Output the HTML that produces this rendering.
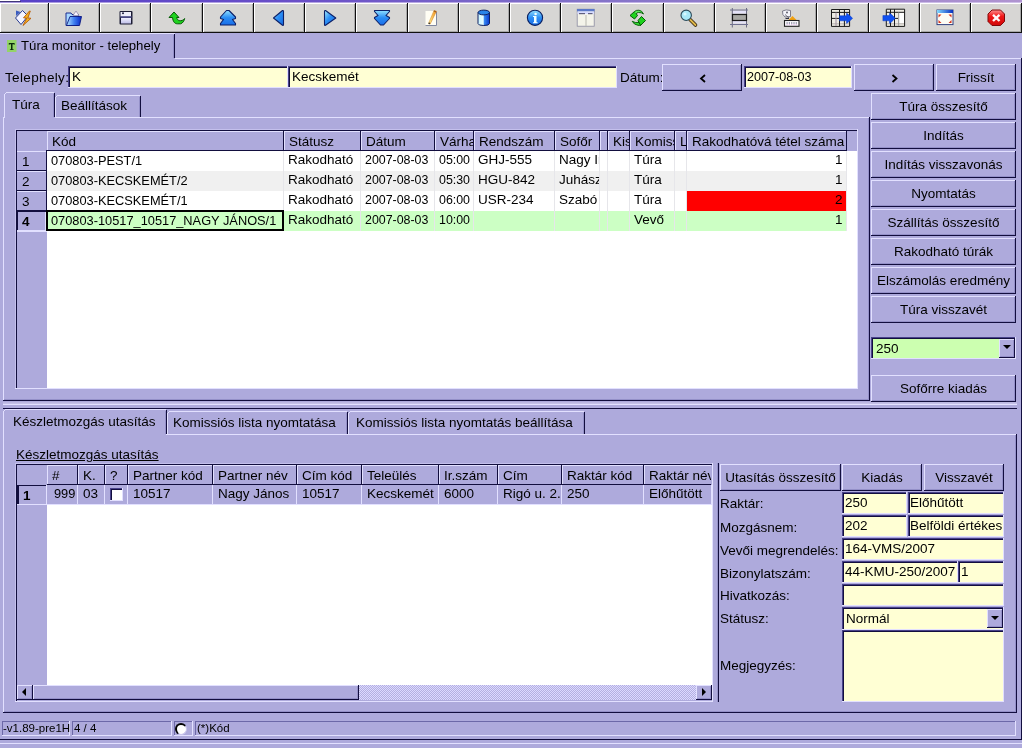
<!DOCTYPE html>
<html><head><meta charset="utf-8"><style>
html,body{margin:0;padding:0;}
body{width:1022px;height:748px;overflow:hidden;position:relative;background:#aeaadc;font-family:"Liberation Sans",sans-serif;font-size:13.5px;color:#000;}
body>div{position:absolute;}
.t{white-space:nowrap;line-height:15px;height:15px;will-change:transform;}
</style></head><body>
<div style="left:0px;top:0px;width:1022px;height:2px;background:linear-gradient(to right,#5640c8 0%,#6a50c8 30%,#8070c8 55%,#b094d0 100%)"></div>
<div style="left:0px;top:0px;width:20px;height:1px;background:#ffffff"></div>
<div style="left:0px;top:1px;width:21px;height:1px;background:#403678"></div>
<div style="left:0px;top:2px;width:1022px;height:1px;background:linear-gradient(to right,#a898e0,#d0c0e8)"></div>
<div style="left:0px;top:3px;width:49px;height:30px;background:#d7d6d4"></div>
<div style="left:0px;top:3px;width:49px;height:1px;background:#ffffff"></div>
<div style="left:0px;top:3px;width:1px;height:29px;background:#ffffff"></div>
<div style="left:47px;top:4px;width:1px;height:28px;background:#a8a8a8"></div>
<div style="left:1px;top:31px;width:47px;height:1px;background:#a8a8a8"></div>
<div style="left:48px;top:3px;width:1px;height:30px;background:#101010"></div>
<div style="left:0px;top:32px;width:49px;height:1px;background:#101010"></div>
<div style="left:49px;top:3px;width:51px;height:30px;background:#d7d6d4"></div>
<div style="left:49px;top:3px;width:51px;height:1px;background:#ffffff"></div>
<div style="left:49px;top:3px;width:1px;height:29px;background:#ffffff"></div>
<div style="left:98px;top:4px;width:1px;height:28px;background:#a8a8a8"></div>
<div style="left:50px;top:31px;width:49px;height:1px;background:#a8a8a8"></div>
<div style="left:99px;top:3px;width:1px;height:30px;background:#101010"></div>
<div style="left:49px;top:32px;width:51px;height:1px;background:#101010"></div>
<div style="left:100px;top:3px;width:51px;height:30px;background:#d7d6d4"></div>
<div style="left:100px;top:3px;width:51px;height:1px;background:#ffffff"></div>
<div style="left:100px;top:3px;width:1px;height:29px;background:#ffffff"></div>
<div style="left:149px;top:4px;width:1px;height:28px;background:#a8a8a8"></div>
<div style="left:101px;top:31px;width:49px;height:1px;background:#a8a8a8"></div>
<div style="left:150px;top:3px;width:1px;height:30px;background:#101010"></div>
<div style="left:100px;top:32px;width:51px;height:1px;background:#101010"></div>
<div style="left:151px;top:3px;width:52px;height:30px;background:#d7d6d4"></div>
<div style="left:151px;top:3px;width:52px;height:1px;background:#ffffff"></div>
<div style="left:151px;top:3px;width:1px;height:29px;background:#ffffff"></div>
<div style="left:201px;top:4px;width:1px;height:28px;background:#a8a8a8"></div>
<div style="left:152px;top:31px;width:50px;height:1px;background:#a8a8a8"></div>
<div style="left:202px;top:3px;width:1px;height:30px;background:#101010"></div>
<div style="left:151px;top:32px;width:52px;height:1px;background:#101010"></div>
<div style="left:203px;top:3px;width:51px;height:30px;background:#d7d6d4"></div>
<div style="left:203px;top:3px;width:51px;height:1px;background:#ffffff"></div>
<div style="left:203px;top:3px;width:1px;height:29px;background:#ffffff"></div>
<div style="left:252px;top:4px;width:1px;height:28px;background:#a8a8a8"></div>
<div style="left:204px;top:31px;width:49px;height:1px;background:#a8a8a8"></div>
<div style="left:253px;top:3px;width:1px;height:30px;background:#101010"></div>
<div style="left:203px;top:32px;width:51px;height:1px;background:#101010"></div>
<div style="left:254px;top:3px;width:51px;height:30px;background:#d7d6d4"></div>
<div style="left:254px;top:3px;width:51px;height:1px;background:#ffffff"></div>
<div style="left:254px;top:3px;width:1px;height:29px;background:#ffffff"></div>
<div style="left:303px;top:4px;width:1px;height:28px;background:#a8a8a8"></div>
<div style="left:255px;top:31px;width:49px;height:1px;background:#a8a8a8"></div>
<div style="left:304px;top:3px;width:1px;height:30px;background:#101010"></div>
<div style="left:254px;top:32px;width:51px;height:1px;background:#101010"></div>
<div style="left:305px;top:3px;width:51px;height:30px;background:#d7d6d4"></div>
<div style="left:305px;top:3px;width:51px;height:1px;background:#ffffff"></div>
<div style="left:305px;top:3px;width:1px;height:29px;background:#ffffff"></div>
<div style="left:354px;top:4px;width:1px;height:28px;background:#a8a8a8"></div>
<div style="left:306px;top:31px;width:49px;height:1px;background:#a8a8a8"></div>
<div style="left:355px;top:3px;width:1px;height:30px;background:#101010"></div>
<div style="left:305px;top:32px;width:51px;height:1px;background:#101010"></div>
<div style="left:356px;top:3px;width:52px;height:30px;background:#d7d6d4"></div>
<div style="left:356px;top:3px;width:52px;height:1px;background:#ffffff"></div>
<div style="left:356px;top:3px;width:1px;height:29px;background:#ffffff"></div>
<div style="left:406px;top:4px;width:1px;height:28px;background:#a8a8a8"></div>
<div style="left:357px;top:31px;width:50px;height:1px;background:#a8a8a8"></div>
<div style="left:407px;top:3px;width:1px;height:30px;background:#101010"></div>
<div style="left:356px;top:32px;width:52px;height:1px;background:#101010"></div>
<div style="left:408px;top:3px;width:51px;height:30px;background:#d7d6d4"></div>
<div style="left:408px;top:3px;width:51px;height:1px;background:#ffffff"></div>
<div style="left:408px;top:3px;width:1px;height:29px;background:#ffffff"></div>
<div style="left:457px;top:4px;width:1px;height:28px;background:#a8a8a8"></div>
<div style="left:409px;top:31px;width:49px;height:1px;background:#a8a8a8"></div>
<div style="left:458px;top:3px;width:1px;height:30px;background:#101010"></div>
<div style="left:408px;top:32px;width:51px;height:1px;background:#101010"></div>
<div style="left:459px;top:3px;width:51px;height:30px;background:#d7d6d4"></div>
<div style="left:459px;top:3px;width:51px;height:1px;background:#ffffff"></div>
<div style="left:459px;top:3px;width:1px;height:29px;background:#ffffff"></div>
<div style="left:508px;top:4px;width:1px;height:28px;background:#a8a8a8"></div>
<div style="left:460px;top:31px;width:49px;height:1px;background:#a8a8a8"></div>
<div style="left:509px;top:3px;width:1px;height:30px;background:#101010"></div>
<div style="left:459px;top:32px;width:51px;height:1px;background:#101010"></div>
<div style="left:510px;top:3px;width:51px;height:30px;background:#d7d6d4"></div>
<div style="left:510px;top:3px;width:51px;height:1px;background:#ffffff"></div>
<div style="left:510px;top:3px;width:1px;height:29px;background:#ffffff"></div>
<div style="left:559px;top:4px;width:1px;height:28px;background:#a8a8a8"></div>
<div style="left:511px;top:31px;width:49px;height:1px;background:#a8a8a8"></div>
<div style="left:560px;top:3px;width:1px;height:30px;background:#101010"></div>
<div style="left:510px;top:32px;width:51px;height:1px;background:#101010"></div>
<div style="left:561px;top:3px;width:51px;height:30px;background:#d7d6d4"></div>
<div style="left:561px;top:3px;width:51px;height:1px;background:#ffffff"></div>
<div style="left:561px;top:3px;width:1px;height:29px;background:#ffffff"></div>
<div style="left:610px;top:4px;width:1px;height:28px;background:#a8a8a8"></div>
<div style="left:562px;top:31px;width:49px;height:1px;background:#a8a8a8"></div>
<div style="left:611px;top:3px;width:1px;height:30px;background:#101010"></div>
<div style="left:561px;top:32px;width:51px;height:1px;background:#101010"></div>
<div style="left:612px;top:3px;width:52px;height:30px;background:#d7d6d4"></div>
<div style="left:612px;top:3px;width:52px;height:1px;background:#ffffff"></div>
<div style="left:612px;top:3px;width:1px;height:29px;background:#ffffff"></div>
<div style="left:662px;top:4px;width:1px;height:28px;background:#a8a8a8"></div>
<div style="left:613px;top:31px;width:50px;height:1px;background:#a8a8a8"></div>
<div style="left:663px;top:3px;width:1px;height:30px;background:#101010"></div>
<div style="left:612px;top:32px;width:52px;height:1px;background:#101010"></div>
<div style="left:664px;top:3px;width:51px;height:30px;background:#d7d6d4"></div>
<div style="left:664px;top:3px;width:51px;height:1px;background:#ffffff"></div>
<div style="left:664px;top:3px;width:1px;height:29px;background:#ffffff"></div>
<div style="left:713px;top:4px;width:1px;height:28px;background:#a8a8a8"></div>
<div style="left:665px;top:31px;width:49px;height:1px;background:#a8a8a8"></div>
<div style="left:714px;top:3px;width:1px;height:30px;background:#101010"></div>
<div style="left:664px;top:32px;width:51px;height:1px;background:#101010"></div>
<div style="left:715px;top:3px;width:51px;height:30px;background:#d7d6d4"></div>
<div style="left:715px;top:3px;width:51px;height:1px;background:#ffffff"></div>
<div style="left:715px;top:3px;width:1px;height:29px;background:#ffffff"></div>
<div style="left:764px;top:4px;width:1px;height:28px;background:#a8a8a8"></div>
<div style="left:716px;top:31px;width:49px;height:1px;background:#a8a8a8"></div>
<div style="left:765px;top:3px;width:1px;height:30px;background:#101010"></div>
<div style="left:715px;top:32px;width:51px;height:1px;background:#101010"></div>
<div style="left:766px;top:3px;width:51px;height:30px;background:#d7d6d4"></div>
<div style="left:766px;top:3px;width:51px;height:1px;background:#ffffff"></div>
<div style="left:766px;top:3px;width:1px;height:29px;background:#ffffff"></div>
<div style="left:815px;top:4px;width:1px;height:28px;background:#a8a8a8"></div>
<div style="left:767px;top:31px;width:49px;height:1px;background:#a8a8a8"></div>
<div style="left:816px;top:3px;width:1px;height:30px;background:#101010"></div>
<div style="left:766px;top:32px;width:51px;height:1px;background:#101010"></div>
<div style="left:817px;top:3px;width:52px;height:30px;background:#d7d6d4"></div>
<div style="left:817px;top:3px;width:52px;height:1px;background:#ffffff"></div>
<div style="left:817px;top:3px;width:1px;height:29px;background:#ffffff"></div>
<div style="left:867px;top:4px;width:1px;height:28px;background:#a8a8a8"></div>
<div style="left:818px;top:31px;width:50px;height:1px;background:#a8a8a8"></div>
<div style="left:868px;top:3px;width:1px;height:30px;background:#101010"></div>
<div style="left:817px;top:32px;width:52px;height:1px;background:#101010"></div>
<div style="left:869px;top:3px;width:51px;height:30px;background:#d7d6d4"></div>
<div style="left:869px;top:3px;width:51px;height:1px;background:#ffffff"></div>
<div style="left:869px;top:3px;width:1px;height:29px;background:#ffffff"></div>
<div style="left:918px;top:4px;width:1px;height:28px;background:#a8a8a8"></div>
<div style="left:870px;top:31px;width:49px;height:1px;background:#a8a8a8"></div>
<div style="left:919px;top:3px;width:1px;height:30px;background:#101010"></div>
<div style="left:869px;top:32px;width:51px;height:1px;background:#101010"></div>
<div style="left:920px;top:3px;width:51px;height:30px;background:#d7d6d4"></div>
<div style="left:920px;top:3px;width:51px;height:1px;background:#ffffff"></div>
<div style="left:920px;top:3px;width:1px;height:29px;background:#ffffff"></div>
<div style="left:969px;top:4px;width:1px;height:28px;background:#a8a8a8"></div>
<div style="left:921px;top:31px;width:49px;height:1px;background:#a8a8a8"></div>
<div style="left:970px;top:3px;width:1px;height:30px;background:#101010"></div>
<div style="left:920px;top:32px;width:51px;height:1px;background:#101010"></div>
<div style="left:971px;top:3px;width:51px;height:30px;background:#d7d6d4"></div>
<div style="left:971px;top:3px;width:51px;height:1px;background:#ffffff"></div>
<div style="left:971px;top:3px;width:1px;height:29px;background:#ffffff"></div>
<div style="left:1020px;top:4px;width:1px;height:28px;background:#a8a8a8"></div>
<div style="left:972px;top:31px;width:49px;height:1px;background:#a8a8a8"></div>
<div style="left:1021px;top:3px;width:1px;height:30px;background:#101010"></div>
<div style="left:971px;top:32px;width:51px;height:1px;background:#101010"></div>
<svg style="position:absolute;left:12px;top:6px;overflow:visible" width="24" height="24" viewBox="0 0 24 24"><defs>
<linearGradient id="gb" x1="0" y1="0" x2="0" y2="1"><stop offset="0" stop-color="#90e0ff"/><stop offset="0.5" stop-color="#2a8cf4"/><stop offset="1" stop-color="#1a6ee8"/></linearGradient>
<linearGradient id="gbl" x1="0" y1="0" x2="1" y2="1"><stop offset="0" stop-color="#a8f0ff"/><stop offset="0.45" stop-color="#2c90f6"/><stop offset="1" stop-color="#1468e0"/></linearGradient>
<linearGradient id="gf" x1="0" y1="0" x2="1" y2="0"><stop offset="0" stop-color="#b8e8ff"/><stop offset="0.5" stop-color="#4080f0"/><stop offset="1" stop-color="#0828c8"/></linearGradient>
<linearGradient id="gcyl" x1="0" y1="0" x2="1" y2="0"><stop offset="0" stop-color="#c8f4ff"/><stop offset="0.45" stop-color="#e8fcff"/><stop offset="0.55" stop-color="#3888f0"/><stop offset="1" stop-color="#0838d0"/></linearGradient>
<linearGradient id="gsv" x1="0" y1="0" x2="0" y2="1"><stop offset="0" stop-color="#f0f0ff"/><stop offset="1" stop-color="#c0c0e8"/></linearGradient>
<linearGradient id="grd" x1="0" y1="0" x2="0" y2="1"><stop offset="0" stop-color="#ff9090"/><stop offset="0.4" stop-color="#f01818"/><stop offset="1" stop-color="#d00808"/></linearGradient>
<linearGradient id="gtb" x1="0" y1="0" x2="1" y2="0"><stop offset="0" stop-color="#80d8ff"/><stop offset="1" stop-color="#0830c0"/></linearGradient>
<linearGradient id="gpn" x1="0" y1="0" x2="1" y2="0"><stop offset="0" stop-color="#fff8a0"/><stop offset="1" stop-color="#f08810"/></linearGradient>
</defs><path d="M3.5 12 L10.5 4.5 L16 10 L9 18.5 Z" fill="#f4f4ff" stroke="#283c90" stroke-width="1"/><path d="M4 4.5 V10 L8.5 6 Z" fill="#3a5cc0"/><path d="M17.5 5 L11.5 11.8 L14.8 12.2 L11 19.5 L19 12.3 L15.8 12 L18.3 5 Z" fill="#f4b020" stroke="#b85c08" stroke-width="0.9" stroke-linejoin="round"/></svg>
<svg style="position:absolute;left:62px;top:6px;overflow:visible" width="24" height="24" viewBox="0 0 24 24"><path d="M4 7 H9 L10 8.5 H16.5 V19.5 H4 Z" fill="#a8d8ff" stroke="#1a2c90" stroke-width="1"/><path d="M11 9.5 L14 5 L17 9.5 Z" fill="#f8f4ff" stroke="#8880a0" stroke-width="0.7"/><path d="M8 10.5 H19.5 L17.5 19.5 H4.5 Z" fill="url(#gf)" stroke="#0a1880" stroke-width="0.9"/></svg>
<svg style="position:absolute;left:113px;top:6px;overflow:visible" width="24" height="24" viewBox="0 0 24 24"><rect x="6.5" y="5" width="13" height="13.5" rx="1" fill="#1c1c34"/><rect x="7.5" y="6" width="10.5" height="4.5" fill="#eeeefa"/><circle cx="10" cy="7.3" r="1" fill="#202040"/><rect x="7.5" y="10.3" width="11" height="1.4" fill="#5a5aa0"/><rect x="8" y="12" width="10" height="5.5" fill="url(#gsv)"/></svg>
<svg style="position:absolute;left:164px;top:6px;overflow:visible" width="24" height="24" viewBox="0 0 24 24"><path d="M10 6 L5 11.5 H8.5 C9 15.5 10.5 17.8 13.5 17.8 H16.5 C18.8 17.2 20.2 15 20.6 12.5 C19.2 14.5 17.2 15 15.3 14.6 C13.8 14.2 12.9 13 12.6 11.5 H15 Z" fill="#1ed21e" stroke="#045a04" stroke-width="1" stroke-linejoin="round"/></svg>
<svg style="position:absolute;left:215px;top:6px;overflow:visible" width="24" height="24" viewBox="0 0 24 24"><path d="M11.5 4.5 H14 L20.5 11 V12.5 L17.5 13.5 L20.5 17.5 V19 H5.5 V17.5 L8.5 13.5 L5.5 12.5 V11 Z" fill="url(#gb)" stroke="#0c2068" stroke-width="1.1" stroke-linejoin="round"/></svg>
<svg style="position:absolute;left:266px;top:6px;overflow:visible" width="24" height="24" viewBox="0 0 24 24"><path d="M7.5 12 L16.5 4.5 Q17.5 4.3 17.5 5.5 V18.5 Q17.5 19.6 16.5 19.3 Z" fill="url(#gbl)" stroke="#0c2068" stroke-width="1.1" stroke-linejoin="round"/></svg>
<svg style="position:absolute;left:317px;top:6px;overflow:visible" width="24" height="24" viewBox="0 0 24 24"><path d="M18.8 12 L8.5 4.5 Q7.5 4.3 7.5 5.5 V18.5 Q7.5 19.6 8.5 19.3 Z" fill="url(#gbl)" stroke="#0c2068" stroke-width="1.1" stroke-linejoin="round"/></svg>
<svg style="position:absolute;left:368px;top:6px;overflow:visible" width="24" height="24" viewBox="0 0 24 24"><path d="M6.5 4.5 H21.5 V5.5 L18 9.5 L21.5 11.5 V12.5 L15.5 19 H12.5 L6.5 12.5 V11.5 L10 9.5 L6.5 5.5 Z" fill="url(#gb)" stroke="#0c2068" stroke-width="1.1" stroke-linejoin="round"/></svg>
<svg style="position:absolute;left:419px;top:6px;overflow:visible" width="24" height="24" viewBox="0 0 24 24"><rect x="6.5" y="5" width="11" height="14.5" fill="#fffef4"/><path d="M6.5 19.5 H17.5 V6" fill="none" stroke="#8088a0" stroke-width="1"/><path d="M9.5 17.5 L15 4.5 L17.5 5.3 L11.2 18 Z" fill="url(#gpn)" stroke="#d08020" stroke-width="0.5"/><path d="M15 4.5 L17.5 5.3 L17 6.5 L14.6 5.6 Z" fill="#a06020"/><circle cx="10.3" cy="17.3" r="0.9" fill="#404040"/></svg>
<svg style="position:absolute;left:470px;top:6px;overflow:visible" width="24" height="24" viewBox="0 0 24 24"><path d="M8 6.5 V17.5 Q8 19.5 13.8 19.5 Q19.5 19.5 19.5 17.5 V6.5 Z" fill="url(#gcyl)" stroke="#102060" stroke-width="1"/><ellipse cx="13.8" cy="6.5" rx="5.7" ry="2.4" fill="#2a84e8" stroke="#102060" stroke-width="1"/></svg>
<svg style="position:absolute;left:521px;top:6px;overflow:visible" width="24" height="24" viewBox="0 0 24 24"><circle cx="14" cy="11.8" r="7.6" fill="url(#gb)" stroke="#0a2060" stroke-width="1.1"/><circle cx="14.6" cy="8" r="1.3" fill="#f0ffff"/><path d="M12 10 H15.5 V16.2 H16.6 V17.3 H12 V16.2 H13 V11 H12 Z" fill="#f0ffff"/></svg>
<svg style="position:absolute;left:572px;top:6px;overflow:visible" width="24" height="24" viewBox="0 0 24 24"><rect x="5.2" y="3.2" width="17" height="17" fill="#f4f4ea" stroke="#8a8aa0" stroke-width="0.8"/><rect x="5" y="3" width="17.5" height="2.5" fill="#5a78c8"/><rect x="5.5" y="5.5" width="16.5" height="2.5" fill="#d8dcff"/><rect x="7" y="7" width="6" height="1.2" fill="#606080"/><rect x="16" y="7" width="4.5" height="1.2" fill="#606080"/><path d="M14 9 V20" stroke="#b8b8b0" stroke-width="1"/></svg>
<svg style="position:absolute;left:623px;top:6px;overflow:visible" width="24" height="24" viewBox="0 0 24 24"><path d="M7 9.5 L11.5 5.5 L14.5 9.5 L11.5 13 Z" fill="#1ed21e" stroke="#045a04" stroke-width="1" stroke-linejoin="round"/><path d="M11.5 5.5 Q13 4 16 4.2 Q19 4.5 20.5 8 Q18.5 6.3 15.5 6.5 Q13.5 6.7 12.8 8" fill="#58e858" stroke="#045a04" stroke-width="0.9"/><path d="M15 14.5 L18.5 10.5 L22.5 14.5 L17.5 19.5 Z" fill="#1ed21e" stroke="#045a04" stroke-width="1" stroke-linejoin="round"/><path d="M9.2 15.3 Q11 18.8 15 19.3 Q16.5 19.5 17.5 19.5 L16 16.5 Q12 17 9.2 15.3 Z" fill="#30d830" stroke="#045a04" stroke-width="0.9"/></svg>
<svg style="position:absolute;left:674px;top:6px;overflow:visible" width="24" height="24" viewBox="0 0 24 24"><path d="M16 13.5 L21.5 19" stroke="#3a2a10" stroke-width="3.6" stroke-linecap="round"/><path d="M16 13.5 L21.5 19" stroke="#e0b848" stroke-width="1.8" stroke-linecap="round"/><circle cx="12.2" cy="9.3" r="5.2" fill="#a8e8f8" stroke="#2a4858" stroke-width="1.1"/><circle cx="11" cy="8" r="1.6" fill="#d8f8ff"/></svg>
<svg style="position:absolute;left:725px;top:6px;overflow:visible" width="24" height="24" viewBox="0 0 24 24"><path d="M7.3 2 V21.5 M21.5 2 V21.5" stroke="#6a6a80" stroke-width="1"/><path d="M5 4 H23 M5 18.5 H23" stroke="#707090" stroke-width="1"/><rect x="8" y="5" width="13" height="2.5" fill="#e4e2f8"/><rect x="8" y="15" width="13" height="2.5" fill="#e4e2f8"/><rect x="7.5" y="8.5" width="14" height="6" fill="#a8a8a4" stroke="#1a1a1a" stroke-width="1.2"/></svg>
<svg style="position:absolute;left:776px;top:6px;overflow:visible" width="24" height="24" viewBox="0 0 24 24"><path d="M6.5 5 Q10 3 14.5 4.5 V10.5 L9 11 Q6 9 6.5 5 Z" fill="#f4f4fa" stroke="#707080" stroke-width="0.9"/><circle cx="11" cy="6.5" r="0.9" fill="#505060"/><path d="M9 8.5 L13 12" stroke="#505060" stroke-width="0.8"/><path d="M12.5 14 L16.5 10 L20.5 14 Z" fill="#f0a010"/><path d="M9.5 12.5 H13" stroke="#303040" stroke-width="1"/><rect x="8.5" y="14.5" width="14.5" height="5.8" fill="#fcfcff" stroke="#202020" stroke-width="1.1"/><path d="M10.5 17 H21" stroke="#404060" stroke-width="1.1" stroke-dasharray="1.2 1.1"/><path d="M10.5 18.6 H21" stroke="#d088d0" stroke-width="0.6" stroke-dasharray="1.2 1.1"/></svg>
<svg style="position:absolute;left:827px;top:6px;overflow:visible" width="24" height="24" viewBox="0 0 24 24"><rect x="4.5" y="3.5" width="18" height="17" fill="#eeece4"/><rect x="5" y="17" width="17" height="1.5" fill="#c8c4c0"/><path d="M4.5 3.5 H22.6 V20.4 H4.5 Z M4.5 6.4 H22.6 M4.5 12.4 H12.5 M12.5 3.5 V20.4 M17.4 3.5 V20.4" fill="none" stroke="#181818" stroke-width="1"/><path d="M9 6.5 V20" stroke="#a090a0" stroke-width="1"/><path d="M12.5 9.8 H19.5 V7.3 Q20.5 7.3 25.6 12.3 Q20.5 17.3 19.5 17.3 V14.8 H12.5 Z" fill="#1050f0" stroke="#0838c0" stroke-width="0.5"/></svg>
<svg style="position:absolute;left:878px;top:6px;overflow:visible" width="24" height="24" viewBox="0 0 24 24"><rect x="8.3" y="3.2" width="18.3" height="17.2" fill="#eeece4"/><rect x="21" y="7" width="5" height="10" fill="#ffffff"/><rect x="8.5" y="17" width="18" height="1.5" fill="#c8c4c0"/><path d="M8.3 3.2 H26.6 V20.4 H8.3 Z M8.3 6.3 H26.6 M12.5 3.2 V20.4 M16.5 3.2 V20.4 M16.5 12.4 H20" fill="none" stroke="#181818" stroke-width="1"/><path d="M20.7 6.5 V20" stroke="#909090" stroke-width="1"/><path d="M4.9 9.6 H11.5 V7.3 Q12.5 7.3 17.3 12.3 Q12.5 17.3 11.5 17.3 V14.8 H4.9 Z" fill="#1050f0" stroke="#0838c0" stroke-width="0.5"/></svg>
<svg style="position:absolute;left:929px;top:6px;overflow:visible" width="24" height="24" viewBox="0 0 24 24"><rect x="8" y="4" width="16" height="14.6" fill="#fcfcf4" stroke="#304080" stroke-width="1"/><rect x="8" y="4" width="16" height="3" fill="url(#gtb)"/><path d="M9.5 8.5 H12.5 L9.5 11.5 Z M22.5 8.5 H19.5 L22.5 11.5 Z M9.5 17 H12.5 L9.5 14 Z M22.5 17 H19.5 L22.5 14 Z" fill="#d83018"/></svg>
<svg style="position:absolute;left:980px;top:6px;overflow:visible" width="24" height="24" viewBox="0 0 24 24"><path d="M12 4 H20.5 L24.5 8 V15.5 L20.5 19.5 H12 L8 15.5 V8 Z" fill="url(#grd)" stroke="#800808" stroke-width="1"/><path d="M13 8.8 L19.5 15 M19.5 8.8 L13 15" stroke="#fff8f8" stroke-width="2.4"/></svg>
<div style="left:0px;top:33px;width:175px;height:1px;background:#e2e0ff"></div>
<div style="left:174px;top:34px;width:1px;height:24px;background:#120e3e"></div>
<div style="left:173px;top:35px;width:1px;height:23px;background:#9490c8"></div>
<div style="left:175px;top:58px;width:847px;height:1px;background:#e2e0ff"></div>
<svg style="position:absolute;left:6px;top:39px" width="12" height="14" viewBox="0 0 12 14"><rect x="1" y="1" width="9.5" height="12" fill="#94d468"/><path d="M2.8 4 H8.6 V5.8 H8 L7.7 5.2 H6.5 V10.2 H7.6 V11 H3.9 V10.2 H5 V5.2 H3.7 L3.4 5.8 H2.8 Z" fill="#0a2a0a"/></svg>
<div class="t" style="left:21px;top:38px;font-size:13.2px">Túra monitor - telephely</div>
<div style="left:1021px;top:58px;width:1px;height:682px;background:#120e3e"></div>
<div class="t" style="left:5px;top:70px;letter-spacing:0.35px">Telephely:</div>
<div style="left:68px;top:66px;width:220px;height:22px;background:#ffffd4"></div>
<div style="left:68px;top:66px;width:220px;height:1px;background:#48428a"></div>
<div style="left:68px;top:66px;width:1px;height:22px;background:#48428a"></div>
<div style="left:69px;top:67px;width:218px;height:1px;background:#120e3e"></div>
<div style="left:69px;top:67px;width:1px;height:20px;background:#120e3e"></div>
<div style="left:68px;top:87px;width:220px;height:1px;background:#e2e0ff"></div>
<div style="left:287px;top:66px;width:1px;height:22px;background:#e2e0ff"></div>
<div class="t" style="left:72px;top:69px;width:215px;overflow:hidden">K</div>
<div style="left:288px;top:66px;width:329px;height:22px;background:#ffffd4"></div>
<div style="left:288px;top:66px;width:329px;height:1px;background:#48428a"></div>
<div style="left:288px;top:66px;width:1px;height:22px;background:#48428a"></div>
<div style="left:289px;top:67px;width:327px;height:1px;background:#120e3e"></div>
<div style="left:289px;top:67px;width:1px;height:20px;background:#120e3e"></div>
<div style="left:288px;top:87px;width:329px;height:1px;background:#e2e0ff"></div>
<div style="left:616px;top:66px;width:1px;height:22px;background:#e2e0ff"></div>
<div class="t" style="left:292px;top:69px;width:324px;overflow:hidden">Kecskemét</div>
<div class="t" style="left:620px;top:70px;">Dátum:</div>
<div style="left:662px;top:64px;width:80px;height:27px;background:#aeaadc"></div>
<div style="left:662px;top:64px;width:80px;height:1px;background:#e2e0ff"></div>
<div style="left:662px;top:64px;width:1px;height:27px;background:#e2e0ff"></div>
<div style="left:663px;top:89px;width:78px;height:1px;background:#9490c8"></div>
<div style="left:740px;top:65px;width:1px;height:25px;background:#9490c8"></div>
<div style="left:662px;top:90px;width:80px;height:1px;background:#120e3e"></div>
<div style="left:741px;top:64px;width:1px;height:27px;background:#120e3e"></div>
<div class="t" style="left:662px;width:80px;text-align:center;top:70px;"></div>
<svg style="position:absolute;left:699px;top:74px" width="8" height="9"><path d="M6 1 L2 4.5 L6 8" fill="none" stroke="#000" stroke-width="1.8"/></svg>
<div style="left:744px;top:66px;width:108px;height:22px;background:#ffffd4"></div>
<div style="left:744px;top:66px;width:108px;height:1px;background:#48428a"></div>
<div style="left:744px;top:66px;width:1px;height:22px;background:#48428a"></div>
<div style="left:745px;top:67px;width:106px;height:1px;background:#120e3e"></div>
<div style="left:745px;top:67px;width:1px;height:20px;background:#120e3e"></div>
<div style="left:744px;top:87px;width:108px;height:1px;background:#e2e0ff"></div>
<div style="left:851px;top:66px;width:1px;height:22px;background:#e2e0ff"></div>
<div class="t" style="left:747px;top:69px;width:104px;overflow:hidden"><span style="font-size:12.6px">2007-08-03</span></div>
<div style="left:854px;top:64px;width:80px;height:27px;background:#aeaadc"></div>
<div style="left:854px;top:64px;width:80px;height:1px;background:#e2e0ff"></div>
<div style="left:854px;top:64px;width:1px;height:27px;background:#e2e0ff"></div>
<div style="left:855px;top:89px;width:78px;height:1px;background:#9490c8"></div>
<div style="left:932px;top:65px;width:1px;height:25px;background:#9490c8"></div>
<div style="left:854px;top:90px;width:80px;height:1px;background:#120e3e"></div>
<div style="left:933px;top:64px;width:1px;height:27px;background:#120e3e"></div>
<div class="t" style="left:854px;width:80px;text-align:center;top:70px;"></div>
<svg style="position:absolute;left:891px;top:74px" width="8" height="9"><path d="M1.5 1 L5.5 4.5 L1.5 8" fill="none" stroke="#000" stroke-width="1.8"/></svg>
<div style="left:936px;top:64px;width:80px;height:27px;background:#aeaadc"></div>
<div style="left:936px;top:64px;width:80px;height:1px;background:#e2e0ff"></div>
<div style="left:936px;top:64px;width:1px;height:27px;background:#e2e0ff"></div>
<div style="left:937px;top:89px;width:78px;height:1px;background:#9490c8"></div>
<div style="left:1014px;top:65px;width:1px;height:25px;background:#9490c8"></div>
<div style="left:936px;top:90px;width:80px;height:1px;background:#120e3e"></div>
<div style="left:1015px;top:64px;width:1px;height:27px;background:#120e3e"></div>
<div class="t" style="left:936px;width:80px;text-align:center;top:70px;">Frissít</div>
<div style="left:55px;top:117px;width:814px;height:1px;background:#e2e0ff"></div>
<div style="left:3px;top:117px;width:1px;height:284px;background:#e2e0ff"></div>
<div style="left:869px;top:117px;width:1px;height:284px;background:#120e3e"></div>
<div style="left:868px;top:118px;width:1px;height:282px;background:#9490c8"></div>
<div style="left:3px;top:400px;width:867px;height:1px;background:#120e3e"></div>
<div style="left:4px;top:399px;width:865px;height:1px;background:#9490c8"></div>
<div style="left:3px;top:402px;width:1014px;height:1px;background:#bcb8e2"></div>
<div style="left:3px;top:403px;width:1014px;height:1px;background:#c4c0e8"></div>
<div style="left:6px;top:92px;width:48px;height:1px;background:#e2e0ff"></div>
<div style="left:4px;top:94px;width:1px;height:24px;background:#e2e0ff"></div>
<div style="left:5px;top:93px;width:1px;height:1px;background:#e2e0ff"></div>
<div style="left:54px;top:93px;width:1px;height:24px;background:#120e3e"></div>
<div style="left:53px;top:94px;width:1px;height:23px;background:#9490c8"></div>
<div class="t" style="left:12px;top:97px;">Túra</div>
<div style="left:57px;top:95px;width:83px;height:1px;background:#e2e0ff"></div>
<div style="left:55px;top:97px;width:1px;height:20px;background:#e2e0ff"></div>
<div style="left:56px;top:96px;width:1px;height:1px;background:#e2e0ff"></div>
<div style="left:140px;top:96px;width:1px;height:21px;background:#120e3e"></div>
<div style="left:139px;top:97px;width:1px;height:20px;background:#9490c8"></div>
<div class="t" style="left:61px;top:98px;">Beállítások</div>
<div style="left:15px;top:129px;width:843px;height:260px;background:#ffffff"></div>
<div style="left:15px;top:129px;width:843px;height:1px;background:#c4c0ec"></div>
<div style="left:15px;top:129px;width:1px;height:260px;background:#c4c0ec"></div>
<div style="left:16px;top:130px;width:841px;height:1px;background:#120e3e"></div>
<div style="left:16px;top:130px;width:1px;height:258px;background:#120e3e"></div>
<div style="left:15px;top:388px;width:843px;height:1px;background:#e2e0ff"></div>
<div style="left:857px;top:129px;width:1px;height:260px;background:#e2e0ff"></div>
<div style="left:17px;top:131px;width:30px;height:257px;background:#aeaadc"></div>
<div style="left:17px;top:131px;width:840px;height:20px;background:#aeaadc"></div>
<div style="left:47px;top:131px;width:237px;height:20px;background:#aeaadc"></div>
<div style="left:47px;top:131px;width:237px;height:1px;background:#e2e0ff"></div>
<div style="left:47px;top:131px;width:1px;height:20px;background:#e2e0ff"></div>
<div style="left:47px;top:150px;width:237px;height:1px;background:#120e3e"></div>
<div style="left:283px;top:131px;width:1px;height:20px;background:#120e3e"></div>
<div class="t" style="left:52px;top:134px;width:231px;overflow:hidden;">Kód</div>
<div style="left:284px;top:131px;width:77px;height:20px;background:#aeaadc"></div>
<div style="left:284px;top:131px;width:77px;height:1px;background:#e2e0ff"></div>
<div style="left:284px;top:131px;width:1px;height:20px;background:#e2e0ff"></div>
<div style="left:284px;top:150px;width:77px;height:1px;background:#120e3e"></div>
<div style="left:360px;top:131px;width:1px;height:20px;background:#120e3e"></div>
<div class="t" style="left:289px;top:134px;width:71px;overflow:hidden;">Státusz</div>
<div style="left:361px;top:131px;width:74px;height:20px;background:#aeaadc"></div>
<div style="left:361px;top:131px;width:74px;height:1px;background:#e2e0ff"></div>
<div style="left:361px;top:131px;width:1px;height:20px;background:#e2e0ff"></div>
<div style="left:361px;top:150px;width:74px;height:1px;background:#120e3e"></div>
<div style="left:434px;top:131px;width:1px;height:20px;background:#120e3e"></div>
<div class="t" style="left:366px;top:134px;width:68px;overflow:hidden;">Dátum</div>
<div style="left:435px;top:131px;width:39px;height:20px;background:#aeaadc"></div>
<div style="left:435px;top:131px;width:39px;height:1px;background:#e2e0ff"></div>
<div style="left:435px;top:131px;width:1px;height:20px;background:#e2e0ff"></div>
<div style="left:435px;top:150px;width:39px;height:1px;background:#120e3e"></div>
<div style="left:473px;top:131px;width:1px;height:20px;background:#120e3e"></div>
<div class="t" style="left:440px;top:134px;width:33px;overflow:hidden;">Várható</div>
<div style="left:474px;top:131px;width:81px;height:20px;background:#aeaadc"></div>
<div style="left:474px;top:131px;width:81px;height:1px;background:#e2e0ff"></div>
<div style="left:474px;top:131px;width:1px;height:20px;background:#e2e0ff"></div>
<div style="left:474px;top:150px;width:81px;height:1px;background:#120e3e"></div>
<div style="left:554px;top:131px;width:1px;height:20px;background:#120e3e"></div>
<div class="t" style="left:479px;top:134px;width:75px;overflow:hidden;">Rendszám</div>
<div style="left:555px;top:131px;width:45px;height:20px;background:#aeaadc"></div>
<div style="left:555px;top:131px;width:45px;height:1px;background:#e2e0ff"></div>
<div style="left:555px;top:131px;width:1px;height:20px;background:#e2e0ff"></div>
<div style="left:555px;top:150px;width:45px;height:1px;background:#120e3e"></div>
<div style="left:599px;top:131px;width:1px;height:20px;background:#120e3e"></div>
<div class="t" style="left:560px;top:134px;width:39px;overflow:hidden;">Sofőr</div>
<div style="left:600px;top:131px;width:8px;height:20px;background:#aeaadc"></div>
<div style="left:600px;top:131px;width:8px;height:1px;background:#e2e0ff"></div>
<div style="left:600px;top:131px;width:1px;height:20px;background:#e2e0ff"></div>
<div style="left:600px;top:150px;width:8px;height:1px;background:#120e3e"></div>
<div style="left:607px;top:131px;width:1px;height:20px;background:#120e3e"></div>
<div style="left:608px;top:131px;width:22px;height:20px;background:#aeaadc"></div>
<div style="left:608px;top:131px;width:22px;height:1px;background:#e2e0ff"></div>
<div style="left:608px;top:131px;width:1px;height:20px;background:#e2e0ff"></div>
<div style="left:608px;top:150px;width:22px;height:1px;background:#120e3e"></div>
<div style="left:629px;top:131px;width:1px;height:20px;background:#120e3e"></div>
<div class="t" style="left:613px;top:134px;width:16px;overflow:hidden;">Kis</div>
<div style="left:630px;top:131px;width:45px;height:20px;background:#aeaadc"></div>
<div style="left:630px;top:131px;width:45px;height:1px;background:#e2e0ff"></div>
<div style="left:630px;top:131px;width:1px;height:20px;background:#e2e0ff"></div>
<div style="left:630px;top:150px;width:45px;height:1px;background:#120e3e"></div>
<div style="left:674px;top:131px;width:1px;height:20px;background:#120e3e"></div>
<div class="t" style="left:635px;top:134px;width:39px;overflow:hidden;">Komissió</div>
<div style="left:675px;top:131px;width:12px;height:20px;background:#aeaadc"></div>
<div style="left:675px;top:131px;width:12px;height:1px;background:#e2e0ff"></div>
<div style="left:675px;top:131px;width:1px;height:20px;background:#e2e0ff"></div>
<div style="left:675px;top:150px;width:12px;height:1px;background:#120e3e"></div>
<div style="left:686px;top:131px;width:1px;height:20px;background:#120e3e"></div>
<div class="t" style="left:680px;top:134px;width:6px;overflow:hidden;">L</div>
<div style="left:687px;top:131px;width:160px;height:20px;background:#aeaadc"></div>
<div style="left:687px;top:131px;width:160px;height:1px;background:#e2e0ff"></div>
<div style="left:687px;top:131px;width:1px;height:20px;background:#e2e0ff"></div>
<div style="left:687px;top:150px;width:160px;height:1px;background:#120e3e"></div>
<div style="left:846px;top:131px;width:1px;height:20px;background:#120e3e"></div>
<div class="t" style="left:692px;top:134px;width:154px;overflow:hidden;">Rakodhatóvá tétel száma</div>
<div style="left:46px;top:150px;width:801px;height:1px;background:#120e3e"></div>
<div style="left:46px;top:150px;width:1px;height:81px;background:#120e3e"></div>
<div style="left:17px;top:151px;width:29px;height:1px;background:#e2e0ff"></div>
<div style="left:17px;top:170px;width:29px;height:1px;background:#120e3e"></div>
<div class="t" style="left:22px;top:154px;">1</div>
<div style="left:47px;top:151px;width:800px;height:20px;background:#ffffff"></div>
<div style="left:283px;top:151px;width:1px;height:20px;background:#e6e6ea"></div>
<div class="t" style="left:51px;top:153px;width:232px;overflow:hidden;font-size:12.8px">070803-PEST/1</div>
<div style="left:360px;top:151px;width:1px;height:20px;background:#e6e6ea"></div>
<div class="t" style="left:288px;top:152px;width:72px;overflow:hidden;">Rakodható</div>
<div style="left:434px;top:151px;width:1px;height:20px;background:#e6e6ea"></div>
<div class="t" style="left:365px;top:153px;width:69px;overflow:hidden;font-size:12.4px">2007-08-03</div>
<div style="left:473px;top:151px;width:1px;height:20px;background:#e6e6ea"></div>
<div class="t" style="left:439px;top:153px;width:34px;overflow:hidden;font-size:12.4px">05:00</div>
<div style="left:554px;top:151px;width:1px;height:20px;background:#e6e6ea"></div>
<div class="t" style="left:478px;top:152px;width:76px;overflow:hidden;">GHJ-555</div>
<div style="left:599px;top:151px;width:1px;height:20px;background:#e6e6ea"></div>
<div class="t" style="left:559px;top:152px;width:40px;overflow:hidden;">Nagy Imre</div>
<div style="left:607px;top:151px;width:1px;height:20px;background:#e6e6ea"></div>
<div style="left:629px;top:151px;width:1px;height:20px;background:#e6e6ea"></div>
<div style="left:674px;top:151px;width:1px;height:20px;background:#e6e6ea"></div>
<div class="t" style="left:634px;top:152px;width:40px;overflow:hidden;">Túra</div>
<div style="left:686px;top:151px;width:1px;height:20px;background:#e6e6ea"></div>
<div style="left:846px;top:151px;width:1px;height:20px;background:#e6e6ea"></div>
<div class="t" style="right:179px;top:152px;">1</div>
<div style="left:17px;top:171px;width:29px;height:1px;background:#e2e0ff"></div>
<div style="left:17px;top:190px;width:29px;height:1px;background:#120e3e"></div>
<div class="t" style="left:22px;top:174px;">2</div>
<div style="left:47px;top:171px;width:800px;height:20px;background:#f0f0f0"></div>
<div style="left:283px;top:171px;width:1px;height:20px;background:#e6e6ea"></div>
<div class="t" style="left:51px;top:173px;width:232px;overflow:hidden;font-size:12.8px">070803-KECSKEMÉT/2</div>
<div style="left:360px;top:171px;width:1px;height:20px;background:#e6e6ea"></div>
<div class="t" style="left:288px;top:172px;width:72px;overflow:hidden;">Rakodható</div>
<div style="left:434px;top:171px;width:1px;height:20px;background:#e6e6ea"></div>
<div class="t" style="left:365px;top:173px;width:69px;overflow:hidden;font-size:12.4px">2007-08-03</div>
<div style="left:473px;top:171px;width:1px;height:20px;background:#e6e6ea"></div>
<div class="t" style="left:439px;top:173px;width:34px;overflow:hidden;font-size:12.4px">05:30</div>
<div style="left:554px;top:171px;width:1px;height:20px;background:#e6e6ea"></div>
<div class="t" style="left:478px;top:172px;width:76px;overflow:hidden;">HGU-842</div>
<div style="left:599px;top:171px;width:1px;height:20px;background:#e6e6ea"></div>
<div class="t" style="left:559px;top:172px;width:40px;overflow:hidden;">Juhász</div>
<div style="left:607px;top:171px;width:1px;height:20px;background:#e6e6ea"></div>
<div style="left:629px;top:171px;width:1px;height:20px;background:#e6e6ea"></div>
<div style="left:674px;top:171px;width:1px;height:20px;background:#e6e6ea"></div>
<div class="t" style="left:634px;top:172px;width:40px;overflow:hidden;">Túra</div>
<div style="left:686px;top:171px;width:1px;height:20px;background:#e6e6ea"></div>
<div style="left:846px;top:171px;width:1px;height:20px;background:#e6e6ea"></div>
<div class="t" style="right:179px;top:172px;">1</div>
<div style="left:17px;top:191px;width:29px;height:1px;background:#e2e0ff"></div>
<div style="left:17px;top:210px;width:29px;height:1px;background:#120e3e"></div>
<div class="t" style="left:22px;top:194px;">3</div>
<div style="left:47px;top:191px;width:800px;height:20px;background:#ffffff"></div>
<div style="left:687px;top:191px;width:160px;height:20px;background:#ff0000"></div>
<div style="left:283px;top:191px;width:1px;height:20px;background:#e6e6ea"></div>
<div class="t" style="left:51px;top:193px;width:232px;overflow:hidden;font-size:12.8px">070803-KECSKEMÉT/1</div>
<div style="left:360px;top:191px;width:1px;height:20px;background:#e6e6ea"></div>
<div class="t" style="left:288px;top:192px;width:72px;overflow:hidden;">Rakodható</div>
<div style="left:434px;top:191px;width:1px;height:20px;background:#e6e6ea"></div>
<div class="t" style="left:365px;top:193px;width:69px;overflow:hidden;font-size:12.4px">2007-08-03</div>
<div style="left:473px;top:191px;width:1px;height:20px;background:#e6e6ea"></div>
<div class="t" style="left:439px;top:193px;width:34px;overflow:hidden;font-size:12.4px">06:00</div>
<div style="left:554px;top:191px;width:1px;height:20px;background:#e6e6ea"></div>
<div class="t" style="left:478px;top:192px;width:76px;overflow:hidden;">USR-234</div>
<div style="left:599px;top:191px;width:1px;height:20px;background:#e6e6ea"></div>
<div class="t" style="left:559px;top:192px;width:40px;overflow:hidden;">Szabó</div>
<div style="left:607px;top:191px;width:1px;height:20px;background:#e6e6ea"></div>
<div style="left:629px;top:191px;width:1px;height:20px;background:#e6e6ea"></div>
<div style="left:674px;top:191px;width:1px;height:20px;background:#e6e6ea"></div>
<div class="t" style="left:634px;top:192px;width:40px;overflow:hidden;">Túra</div>
<div style="left:686px;top:191px;width:1px;height:20px;background:#e6e6ea"></div>
<div style="left:846px;top:191px;width:1px;height:20px;background:#e6e6ea"></div>
<div class="t" style="right:179px;top:192px;">2</div>
<div class="t" style="left:22px;top:214px;font-weight:bold">4</div>
<div style="left:47px;top:211px;width:800px;height:20px;background:#ccffc4"></div>
<div style="left:283px;top:211px;width:1px;height:20px;background:#e6e6ea"></div>
<div class="t" style="left:51px;top:213px;width:232px;overflow:hidden;font-size:12.8px">070803-10517_10517_NAGY JÁNOS/1</div>
<div style="left:360px;top:211px;width:1px;height:20px;background:#e6e6ea"></div>
<div class="t" style="left:288px;top:212px;width:72px;overflow:hidden;">Rakodható</div>
<div style="left:434px;top:211px;width:1px;height:20px;background:#e6e6ea"></div>
<div class="t" style="left:365px;top:213px;width:69px;overflow:hidden;font-size:12.4px">2007-08-03</div>
<div style="left:473px;top:211px;width:1px;height:20px;background:#e6e6ea"></div>
<div class="t" style="left:439px;top:213px;width:34px;overflow:hidden;font-size:12.4px">10:00</div>
<div style="left:554px;top:211px;width:1px;height:20px;background:#e6e6ea"></div>
<div style="left:599px;top:211px;width:1px;height:20px;background:#e6e6ea"></div>
<div style="left:607px;top:211px;width:1px;height:20px;background:#e6e6ea"></div>
<div style="left:629px;top:211px;width:1px;height:20px;background:#e6e6ea"></div>
<div style="left:674px;top:211px;width:1px;height:20px;background:#e6e6ea"></div>
<div class="t" style="left:634px;top:212px;width:40px;overflow:hidden;">Vevő</div>
<div style="left:686px;top:211px;width:1px;height:20px;background:#e6e6ea"></div>
<div style="left:846px;top:211px;width:1px;height:20px;background:#e6e6ea"></div>
<div class="t" style="right:179px;top:212px;">1</div>
<div style="left:17px;top:210px;width:29px;height:1px;background:#120e3e"></div>
<div style="left:17px;top:211px;width:29px;height:1px;background:#120e3e"></div>
<div style="left:17px;top:210px;width:1px;height:21px;background:#120e3e"></div>
<div style="left:17px;top:230px;width:30px;height:1px;background:#e2e0ff"></div>
<div style="left:45px;top:212px;width:1px;height:19px;background:#e2e0ff"></div>
<div style="left:17px;top:231px;width:30px;height:1px;background:#e2e0ff"></div>
<div style="left:46px;top:210px;width:234px;height:17px;border:2px solid #000"></div>
<div style="left:871px;top:93px;width:145px;height:27px;background:#aeaadc"></div>
<div style="left:871px;top:93px;width:145px;height:1px;background:#e2e0ff"></div>
<div style="left:871px;top:93px;width:1px;height:27px;background:#e2e0ff"></div>
<div style="left:872px;top:118px;width:143px;height:1px;background:#9490c8"></div>
<div style="left:1014px;top:94px;width:1px;height:25px;background:#9490c8"></div>
<div style="left:871px;top:119px;width:145px;height:1px;background:#120e3e"></div>
<div style="left:1015px;top:93px;width:1px;height:27px;background:#120e3e"></div>
<div class="t" style="left:871px;width:145px;text-align:center;top:99px;">Túra összesítő</div>
<div style="left:871px;top:122px;width:145px;height:27px;background:#aeaadc"></div>
<div style="left:871px;top:122px;width:145px;height:1px;background:#e2e0ff"></div>
<div style="left:871px;top:122px;width:1px;height:27px;background:#e2e0ff"></div>
<div style="left:872px;top:147px;width:143px;height:1px;background:#9490c8"></div>
<div style="left:1014px;top:123px;width:1px;height:25px;background:#9490c8"></div>
<div style="left:871px;top:148px;width:145px;height:1px;background:#120e3e"></div>
<div style="left:1015px;top:122px;width:1px;height:27px;background:#120e3e"></div>
<div class="t" style="left:871px;width:145px;text-align:center;top:128px;">Indítás</div>
<div style="left:871px;top:151px;width:145px;height:27px;background:#aeaadc"></div>
<div style="left:871px;top:151px;width:145px;height:1px;background:#e2e0ff"></div>
<div style="left:871px;top:151px;width:1px;height:27px;background:#e2e0ff"></div>
<div style="left:872px;top:176px;width:143px;height:1px;background:#9490c8"></div>
<div style="left:1014px;top:152px;width:1px;height:25px;background:#9490c8"></div>
<div style="left:871px;top:177px;width:145px;height:1px;background:#120e3e"></div>
<div style="left:1015px;top:151px;width:1px;height:27px;background:#120e3e"></div>
<div class="t" style="left:871px;width:145px;text-align:center;top:157px;">Indítás visszavonás</div>
<div style="left:871px;top:180px;width:145px;height:27px;background:#aeaadc"></div>
<div style="left:871px;top:180px;width:145px;height:1px;background:#e2e0ff"></div>
<div style="left:871px;top:180px;width:1px;height:27px;background:#e2e0ff"></div>
<div style="left:872px;top:205px;width:143px;height:1px;background:#9490c8"></div>
<div style="left:1014px;top:181px;width:1px;height:25px;background:#9490c8"></div>
<div style="left:871px;top:206px;width:145px;height:1px;background:#120e3e"></div>
<div style="left:1015px;top:180px;width:1px;height:27px;background:#120e3e"></div>
<div class="t" style="left:871px;width:145px;text-align:center;top:186px;">Nyomtatás</div>
<div style="left:871px;top:209px;width:145px;height:27px;background:#aeaadc"></div>
<div style="left:871px;top:209px;width:145px;height:1px;background:#e2e0ff"></div>
<div style="left:871px;top:209px;width:1px;height:27px;background:#e2e0ff"></div>
<div style="left:872px;top:234px;width:143px;height:1px;background:#9490c8"></div>
<div style="left:1014px;top:210px;width:1px;height:25px;background:#9490c8"></div>
<div style="left:871px;top:235px;width:145px;height:1px;background:#120e3e"></div>
<div style="left:1015px;top:209px;width:1px;height:27px;background:#120e3e"></div>
<div class="t" style="left:871px;width:145px;text-align:center;top:215px;">Szállítás összesítő</div>
<div style="left:871px;top:238px;width:145px;height:27px;background:#aeaadc"></div>
<div style="left:871px;top:238px;width:145px;height:1px;background:#e2e0ff"></div>
<div style="left:871px;top:238px;width:1px;height:27px;background:#e2e0ff"></div>
<div style="left:872px;top:263px;width:143px;height:1px;background:#9490c8"></div>
<div style="left:1014px;top:239px;width:1px;height:25px;background:#9490c8"></div>
<div style="left:871px;top:264px;width:145px;height:1px;background:#120e3e"></div>
<div style="left:1015px;top:238px;width:1px;height:27px;background:#120e3e"></div>
<div class="t" style="left:871px;width:145px;text-align:center;top:244px;">Rakodható túrák</div>
<div style="left:871px;top:267px;width:145px;height:27px;background:#aeaadc"></div>
<div style="left:871px;top:267px;width:145px;height:1px;background:#e2e0ff"></div>
<div style="left:871px;top:267px;width:1px;height:27px;background:#e2e0ff"></div>
<div style="left:872px;top:292px;width:143px;height:1px;background:#9490c8"></div>
<div style="left:1014px;top:268px;width:1px;height:25px;background:#9490c8"></div>
<div style="left:871px;top:293px;width:145px;height:1px;background:#120e3e"></div>
<div style="left:1015px;top:267px;width:1px;height:27px;background:#120e3e"></div>
<div class="t" style="left:871px;width:145px;text-align:center;top:273px;">Elszámolás eredmény</div>
<div style="left:871px;top:296px;width:145px;height:27px;background:#aeaadc"></div>
<div style="left:871px;top:296px;width:145px;height:1px;background:#e2e0ff"></div>
<div style="left:871px;top:296px;width:1px;height:27px;background:#e2e0ff"></div>
<div style="left:872px;top:321px;width:143px;height:1px;background:#9490c8"></div>
<div style="left:1014px;top:297px;width:1px;height:25px;background:#9490c8"></div>
<div style="left:871px;top:322px;width:145px;height:1px;background:#120e3e"></div>
<div style="left:1015px;top:296px;width:1px;height:27px;background:#120e3e"></div>
<div class="t" style="left:871px;width:145px;text-align:center;top:302px;">Túra visszavét</div>
<div style="left:871px;top:337px;width:145px;height:22px;background:#ccffb0"></div>
<div style="left:871px;top:337px;width:145px;height:1px;background:#48428a"></div>
<div style="left:871px;top:337px;width:1px;height:22px;background:#48428a"></div>
<div style="left:872px;top:338px;width:143px;height:1px;background:#120e3e"></div>
<div style="left:872px;top:338px;width:1px;height:20px;background:#120e3e"></div>
<div style="left:871px;top:358px;width:145px;height:1px;background:#e2e0ff"></div>
<div style="left:1015px;top:337px;width:1px;height:22px;background:#e2e0ff"></div>
<div class="t" style="left:876px;top:341px;">250</div>
<div style="left:999px;top:339px;width:16px;height:19px;background:#aeaadc"></div>
<div style="left:999px;top:339px;width:16px;height:1px;background:#e2e0ff"></div>
<div style="left:999px;top:339px;width:1px;height:19px;background:#e2e0ff"></div>
<div style="left:1000px;top:356px;width:14px;height:1px;background:#9490c8"></div>
<div style="left:1013px;top:340px;width:1px;height:17px;background:#9490c8"></div>
<div style="left:999px;top:357px;width:16px;height:1px;background:#120e3e"></div>
<div style="left:1014px;top:339px;width:1px;height:19px;background:#120e3e"></div>
<svg style="position:absolute;left:1003px;top:345px" width="9" height="6"><path d="M0 0H8L4 4Z" fill="#000"/></svg>
<div style="left:871px;top:375px;width:145px;height:27px;background:#aeaadc"></div>
<div style="left:871px;top:375px;width:145px;height:1px;background:#e2e0ff"></div>
<div style="left:871px;top:375px;width:1px;height:27px;background:#e2e0ff"></div>
<div style="left:872px;top:400px;width:143px;height:1px;background:#9490c8"></div>
<div style="left:1014px;top:376px;width:1px;height:25px;background:#9490c8"></div>
<div style="left:871px;top:401px;width:145px;height:1px;background:#120e3e"></div>
<div style="left:1015px;top:375px;width:1px;height:27px;background:#120e3e"></div>
<div class="t" style="left:871px;width:145px;text-align:center;top:381px;">Sofőrre kiadás</div>
<div style="left:3px;top:404px;width:1014px;height:1px;background:#e2e0ff"></div>
<div style="left:3px;top:408px;width:1014px;height:1px;background:#120e3e"></div>
<div style="left:166px;top:434px;width:850px;height:1px;background:#e2e0ff"></div>
<div style="left:3px;top:434px;width:1px;height:279px;background:#e2e0ff"></div>
<div style="left:1016px;top:434px;width:1px;height:279px;background:#120e3e"></div>
<div style="left:1015px;top:435px;width:1px;height:277px;background:#9490c8"></div>
<div style="left:3px;top:712px;width:1014px;height:1px;background:#120e3e"></div>
<div style="left:4px;top:711px;width:1012px;height:1px;background:#9490c8"></div>
<div style="left:5px;top:409px;width:161px;height:1px;background:#e2e0ff"></div>
<div style="left:3px;top:411px;width:1px;height:24px;background:#e2e0ff"></div>
<div style="left:4px;top:410px;width:1px;height:1px;background:#e2e0ff"></div>
<div style="left:166px;top:410px;width:1px;height:24px;background:#120e3e"></div>
<div style="left:165px;top:411px;width:1px;height:23px;background:#9490c8"></div>
<div class="t" style="left:13px;top:414px;">Készletmozgás utasítás</div>
<div style="left:169px;top:411px;width:178px;height:1px;background:#e2e0ff"></div>
<div style="left:167px;top:413px;width:1px;height:21px;background:#e2e0ff"></div>
<div style="left:168px;top:412px;width:1px;height:1px;background:#e2e0ff"></div>
<div style="left:347px;top:412px;width:1px;height:22px;background:#120e3e"></div>
<div style="left:346px;top:413px;width:1px;height:21px;background:#9490c8"></div>
<div class="t" style="left:173px;top:415px;">Komissiós lista nyomtatása</div>
<div style="left:350px;top:411px;width:234px;height:1px;background:#e2e0ff"></div>
<div style="left:348px;top:413px;width:1px;height:21px;background:#e2e0ff"></div>
<div style="left:349px;top:412px;width:1px;height:1px;background:#e2e0ff"></div>
<div style="left:584px;top:412px;width:1px;height:22px;background:#120e3e"></div>
<div style="left:583px;top:413px;width:1px;height:21px;background:#9490c8"></div>
<div class="t" style="left:356px;top:415px;">Komissiós lista nyomtatás beállítása</div>
<div class="t" style="left:16px;top:447px;text-decoration:underline">Készletmozgás utasítás</div>
<div style="left:15px;top:463px;width:698px;height:239px;background:#ffffff"></div>
<div style="left:15px;top:463px;width:698px;height:1px;background:#c4c0ec"></div>
<div style="left:15px;top:463px;width:1px;height:239px;background:#c4c0ec"></div>
<div style="left:16px;top:464px;width:696px;height:1px;background:#120e3e"></div>
<div style="left:16px;top:464px;width:1px;height:237px;background:#120e3e"></div>
<div style="left:15px;top:701px;width:698px;height:1px;background:#e2e0ff"></div>
<div style="left:712px;top:463px;width:1px;height:239px;background:#e2e0ff"></div>
<div style="left:17px;top:465px;width:30px;height:221px;background:#aeaadc"></div>
<div style="left:17px;top:465px;width:694px;height:20px;background:#aeaadc"></div>
<div style="left:47px;top:465px;width:31px;height:20px;background:#aeaadc"></div>
<div style="left:47px;top:465px;width:31px;height:1px;background:#e2e0ff"></div>
<div style="left:47px;top:465px;width:1px;height:20px;background:#e2e0ff"></div>
<div style="left:47px;top:484px;width:31px;height:1px;background:#120e3e"></div>
<div style="left:77px;top:465px;width:1px;height:20px;background:#120e3e"></div>
<div class="t" style="left:52px;top:468px;width:25px;overflow:hidden;">#</div>
<div style="left:78px;top:465px;width:27px;height:20px;background:#aeaadc"></div>
<div style="left:78px;top:465px;width:27px;height:1px;background:#e2e0ff"></div>
<div style="left:78px;top:465px;width:1px;height:20px;background:#e2e0ff"></div>
<div style="left:78px;top:484px;width:27px;height:1px;background:#120e3e"></div>
<div style="left:104px;top:465px;width:1px;height:20px;background:#120e3e"></div>
<div class="t" style="left:83px;top:468px;width:21px;overflow:hidden;">K.</div>
<div style="left:105px;top:465px;width:23px;height:20px;background:#aeaadc"></div>
<div style="left:105px;top:465px;width:23px;height:1px;background:#e2e0ff"></div>
<div style="left:105px;top:465px;width:1px;height:20px;background:#e2e0ff"></div>
<div style="left:105px;top:484px;width:23px;height:1px;background:#120e3e"></div>
<div style="left:127px;top:465px;width:1px;height:20px;background:#120e3e"></div>
<div class="t" style="left:110px;top:468px;width:17px;overflow:hidden;">?</div>
<div style="left:128px;top:465px;width:85px;height:20px;background:#aeaadc"></div>
<div style="left:128px;top:465px;width:85px;height:1px;background:#e2e0ff"></div>
<div style="left:128px;top:465px;width:1px;height:20px;background:#e2e0ff"></div>
<div style="left:128px;top:484px;width:85px;height:1px;background:#120e3e"></div>
<div style="left:212px;top:465px;width:1px;height:20px;background:#120e3e"></div>
<div class="t" style="left:133px;top:468px;width:79px;overflow:hidden;">Partner kód</div>
<div style="left:213px;top:465px;width:84px;height:20px;background:#aeaadc"></div>
<div style="left:213px;top:465px;width:84px;height:1px;background:#e2e0ff"></div>
<div style="left:213px;top:465px;width:1px;height:20px;background:#e2e0ff"></div>
<div style="left:213px;top:484px;width:84px;height:1px;background:#120e3e"></div>
<div style="left:296px;top:465px;width:1px;height:20px;background:#120e3e"></div>
<div class="t" style="left:218px;top:468px;width:78px;overflow:hidden;">Partner név</div>
<div style="left:297px;top:465px;width:65px;height:20px;background:#aeaadc"></div>
<div style="left:297px;top:465px;width:65px;height:1px;background:#e2e0ff"></div>
<div style="left:297px;top:465px;width:1px;height:20px;background:#e2e0ff"></div>
<div style="left:297px;top:484px;width:65px;height:1px;background:#120e3e"></div>
<div style="left:361px;top:465px;width:1px;height:20px;background:#120e3e"></div>
<div class="t" style="left:302px;top:468px;width:59px;overflow:hidden;">Cím kód</div>
<div style="left:362px;top:465px;width:77px;height:20px;background:#aeaadc"></div>
<div style="left:362px;top:465px;width:77px;height:1px;background:#e2e0ff"></div>
<div style="left:362px;top:465px;width:1px;height:20px;background:#e2e0ff"></div>
<div style="left:362px;top:484px;width:77px;height:1px;background:#120e3e"></div>
<div style="left:438px;top:465px;width:1px;height:20px;background:#120e3e"></div>
<div class="t" style="left:367px;top:468px;width:71px;overflow:hidden;">Teleülés</div>
<div style="left:439px;top:465px;width:59px;height:20px;background:#aeaadc"></div>
<div style="left:439px;top:465px;width:59px;height:1px;background:#e2e0ff"></div>
<div style="left:439px;top:465px;width:1px;height:20px;background:#e2e0ff"></div>
<div style="left:439px;top:484px;width:59px;height:1px;background:#120e3e"></div>
<div style="left:497px;top:465px;width:1px;height:20px;background:#120e3e"></div>
<div class="t" style="left:444px;top:468px;width:53px;overflow:hidden;">Ir.szám</div>
<div style="left:498px;top:465px;width:64px;height:20px;background:#aeaadc"></div>
<div style="left:498px;top:465px;width:64px;height:1px;background:#e2e0ff"></div>
<div style="left:498px;top:465px;width:1px;height:20px;background:#e2e0ff"></div>
<div style="left:498px;top:484px;width:64px;height:1px;background:#120e3e"></div>
<div style="left:561px;top:465px;width:1px;height:20px;background:#120e3e"></div>
<div class="t" style="left:503px;top:468px;width:58px;overflow:hidden;">Cím</div>
<div style="left:562px;top:465px;width:82px;height:20px;background:#aeaadc"></div>
<div style="left:562px;top:465px;width:82px;height:1px;background:#e2e0ff"></div>
<div style="left:562px;top:465px;width:1px;height:20px;background:#e2e0ff"></div>
<div style="left:562px;top:484px;width:82px;height:1px;background:#120e3e"></div>
<div style="left:643px;top:465px;width:1px;height:20px;background:#120e3e"></div>
<div class="t" style="left:567px;top:468px;width:76px;overflow:hidden;">Raktár kód</div>
<div style="left:644px;top:465px;width:68px;height:20px;background:#aeaadc"></div>
<div style="left:644px;top:465px;width:68px;height:1px;background:#e2e0ff"></div>
<div style="left:644px;top:465px;width:1px;height:20px;background:#e2e0ff"></div>
<div style="left:644px;top:484px;width:68px;height:1px;background:#120e3e"></div>
<div style="left:711px;top:465px;width:1px;height:20px;background:#120e3e"></div>
<div style="left:711px;top:465px;width:1px;height:20px;background:#aeaadc"></div>
<div class="t" style="left:649px;top:468px;width:62px;overflow:hidden;">Raktár név</div>
<div style="left:17px;top:485px;width:29px;height:1px;background:#120e3e"></div>
<div style="left:17px;top:485px;width:1px;height:20px;background:#120e3e"></div>
<div style="left:18px;top:486px;width:1px;height:19px;background:#120e3e"></div>
<div style="left:17px;top:504px;width:30px;height:1px;background:#e2e0ff"></div>
<div style="left:46px;top:485px;width:1px;height:20px;background:#e2e0ff"></div>
<div class="t" style="left:23px;top:488px;font-weight:bold">1</div>
<div style="left:47px;top:485px;width:664px;height:20px;background:#aeaadc"></div>
<div style="left:47px;top:504px;width:664px;height:1px;background:#e2e0ff"></div>
<div style="left:77px;top:485px;width:1px;height:20px;background:#e2e0ff"></div>
<div class="t" style="right:947px;top:486px;font-size:12.8px">999</div>
<div style="left:104px;top:485px;width:1px;height:20px;background:#e2e0ff"></div>
<div class="t" style="left:83px;top:486px;width:21px;overflow:hidden;">03</div>
<div style="left:127px;top:485px;width:1px;height:20px;background:#e2e0ff"></div>
<div style="left:212px;top:485px;width:1px;height:20px;background:#e2e0ff"></div>
<div class="t" style="left:133px;top:486px;width:79px;overflow:hidden;">10517</div>
<div style="left:296px;top:485px;width:1px;height:20px;background:#e2e0ff"></div>
<div class="t" style="left:218px;top:486px;width:78px;overflow:hidden;">Nagy János</div>
<div style="left:361px;top:485px;width:1px;height:20px;background:#e2e0ff"></div>
<div class="t" style="left:302px;top:486px;width:59px;overflow:hidden;">10517</div>
<div style="left:438px;top:485px;width:1px;height:20px;background:#e2e0ff"></div>
<div class="t" style="left:367px;top:486px;width:71px;overflow:hidden;">Kecskemét</div>
<div style="left:497px;top:485px;width:1px;height:20px;background:#e2e0ff"></div>
<div class="t" style="left:444px;top:486px;width:53px;overflow:hidden;">6000</div>
<div style="left:561px;top:485px;width:1px;height:20px;background:#e2e0ff"></div>
<div class="t" style="left:503px;top:486px;width:58px;overflow:hidden;">Rigó u. 2.</div>
<div style="left:643px;top:485px;width:1px;height:20px;background:#e2e0ff"></div>
<div class="t" style="left:567px;top:486px;width:76px;overflow:hidden;">250</div>
<div style="left:711px;top:485px;width:1px;height:20px;background:#e2e0ff"></div>
<div class="t" style="left:649px;top:486px;width:62px;overflow:hidden;">Előhűtött</div>
<div style="left:110px;top:488px;width:13px;height:13px;background:#ffffff"></div>
<div style="left:110px;top:488px;width:13px;height:1px;background:#48428a"></div>
<div style="left:110px;top:488px;width:1px;height:13px;background:#48428a"></div>
<div style="left:111px;top:489px;width:11px;height:1px;background:#120e3e"></div>
<div style="left:111px;top:489px;width:1px;height:11px;background:#120e3e"></div>
<div style="left:110px;top:500px;width:13px;height:1px;background:#e2e0ff"></div>
<div style="left:122px;top:488px;width:1px;height:13px;background:#e2e0ff"></div>
<div style="left:17px;top:685px;width:695px;height:15px;background-color:#c8c4ec;background-image:repeating-conic-gradient(#b4b0e0 0 25%, #dcd9ff 0 50%);background-size:2px 2px"></div>
<div style="left:17px;top:700px;width:695px;height:1px;background:#aeaadc"></div>
<div style="left:17px;top:685px;width:16px;height:15px;background:#aeaadc"></div>
<div style="left:17px;top:685px;width:16px;height:1px;background:#e2e0ff"></div>
<div style="left:17px;top:685px;width:1px;height:15px;background:#e2e0ff"></div>
<div style="left:18px;top:698px;width:14px;height:1px;background:#9490c8"></div>
<div style="left:31px;top:686px;width:1px;height:13px;background:#9490c8"></div>
<div style="left:17px;top:699px;width:16px;height:1px;background:#120e3e"></div>
<div style="left:32px;top:685px;width:1px;height:15px;background:#120e3e"></div>
<svg style="position:absolute;left:22px;top:688px" width="6" height="9"><path d="M4 0V8L0 4Z" fill="#000"/></svg>
<div style="left:33px;top:685px;width:326px;height:15px;background:#aeaadc"></div>
<div style="left:33px;top:685px;width:326px;height:1px;background:#e2e0ff"></div>
<div style="left:33px;top:685px;width:1px;height:15px;background:#e2e0ff"></div>
<div style="left:34px;top:698px;width:324px;height:1px;background:#9490c8"></div>
<div style="left:357px;top:686px;width:1px;height:13px;background:#9490c8"></div>
<div style="left:33px;top:699px;width:326px;height:1px;background:#120e3e"></div>
<div style="left:358px;top:685px;width:1px;height:15px;background:#120e3e"></div>
<div style="left:696px;top:685px;width:16px;height:15px;background:#aeaadc"></div>
<div style="left:696px;top:685px;width:16px;height:1px;background:#e2e0ff"></div>
<div style="left:696px;top:685px;width:1px;height:15px;background:#e2e0ff"></div>
<div style="left:697px;top:698px;width:14px;height:1px;background:#9490c8"></div>
<div style="left:710px;top:686px;width:1px;height:13px;background:#9490c8"></div>
<div style="left:696px;top:699px;width:16px;height:1px;background:#120e3e"></div>
<div style="left:711px;top:685px;width:1px;height:15px;background:#120e3e"></div>
<svg style="position:absolute;left:702px;top:688px" width="6" height="9"><path d="M0 0V8L4 4Z" fill="#000"/></svg>
<div style="left:718px;top:463px;width:1px;height:239px;background:#120e3e"></div>
<div style="left:717px;top:463px;width:1px;height:239px;background:#9490c8"></div>
<div style="left:720px;top:464px;width:121px;height:27px;background:#aeaadc"></div>
<div style="left:720px;top:464px;width:121px;height:1px;background:#e2e0ff"></div>
<div style="left:720px;top:464px;width:1px;height:27px;background:#e2e0ff"></div>
<div style="left:721px;top:489px;width:119px;height:1px;background:#9490c8"></div>
<div style="left:839px;top:465px;width:1px;height:25px;background:#9490c8"></div>
<div style="left:720px;top:490px;width:121px;height:1px;background:#120e3e"></div>
<div style="left:840px;top:464px;width:1px;height:27px;background:#120e3e"></div>
<div class="t" style="left:720px;width:121px;text-align:center;top:470px;">Utasítás összesítő</div>
<div style="left:842px;top:464px;width:80px;height:27px;background:#aeaadc"></div>
<div style="left:842px;top:464px;width:80px;height:1px;background:#e2e0ff"></div>
<div style="left:842px;top:464px;width:1px;height:27px;background:#e2e0ff"></div>
<div style="left:843px;top:489px;width:78px;height:1px;background:#9490c8"></div>
<div style="left:920px;top:465px;width:1px;height:25px;background:#9490c8"></div>
<div style="left:842px;top:490px;width:80px;height:1px;background:#120e3e"></div>
<div style="left:921px;top:464px;width:1px;height:27px;background:#120e3e"></div>
<div class="t" style="left:842px;width:80px;text-align:center;top:470px;">Kiadás</div>
<div style="left:924px;top:464px;width:80px;height:27px;background:#aeaadc"></div>
<div style="left:924px;top:464px;width:80px;height:1px;background:#e2e0ff"></div>
<div style="left:924px;top:464px;width:1px;height:27px;background:#e2e0ff"></div>
<div style="left:925px;top:489px;width:78px;height:1px;background:#9490c8"></div>
<div style="left:1002px;top:465px;width:1px;height:25px;background:#9490c8"></div>
<div style="left:924px;top:490px;width:80px;height:1px;background:#120e3e"></div>
<div style="left:1003px;top:464px;width:1px;height:27px;background:#120e3e"></div>
<div class="t" style="left:924px;width:80px;text-align:center;top:470px;">Visszavét</div>
<div class="t" style="left:720px;top:496px;">Raktár:</div>
<div class="t" style="left:720px;top:520px;">Mozgásnem:</div>
<div class="t" style="left:720px;top:543px;">Vevői megrendelés:</div>
<div class="t" style="left:720px;top:566px;">Bizonylatszám:</div>
<div class="t" style="left:720px;top:588px;">Hivatkozás:</div>
<div class="t" style="left:720px;top:611px;">Státusz:</div>
<div class="t" style="left:720px;top:658px;">Megjegyzés:</div>
<div style="left:842px;top:492px;width:65px;height:22px;background:#ffffd4"></div>
<div style="left:842px;top:492px;width:65px;height:1px;background:#48428a"></div>
<div style="left:842px;top:492px;width:1px;height:22px;background:#48428a"></div>
<div style="left:843px;top:493px;width:63px;height:1px;background:#120e3e"></div>
<div style="left:843px;top:493px;width:1px;height:20px;background:#120e3e"></div>
<div style="left:842px;top:513px;width:65px;height:1px;background:#e2e0ff"></div>
<div style="left:906px;top:492px;width:1px;height:22px;background:#e2e0ff"></div>
<div class="t" style="left:845px;top:495px;width:61px;overflow:hidden">250</div>
<div style="left:908px;top:492px;width:96px;height:22px;background:#ffffd4"></div>
<div style="left:908px;top:492px;width:96px;height:1px;background:#48428a"></div>
<div style="left:908px;top:492px;width:1px;height:22px;background:#48428a"></div>
<div style="left:909px;top:493px;width:94px;height:1px;background:#120e3e"></div>
<div style="left:909px;top:493px;width:1px;height:20px;background:#120e3e"></div>
<div style="left:908px;top:513px;width:96px;height:1px;background:#e2e0ff"></div>
<div style="left:1003px;top:492px;width:1px;height:22px;background:#e2e0ff"></div>
<div class="t" style="left:910px;top:495px;width:93px;overflow:hidden">Előhűtött</div>
<div style="left:842px;top:515px;width:65px;height:22px;background:#ffffd4"></div>
<div style="left:842px;top:515px;width:65px;height:1px;background:#48428a"></div>
<div style="left:842px;top:515px;width:1px;height:22px;background:#48428a"></div>
<div style="left:843px;top:516px;width:63px;height:1px;background:#120e3e"></div>
<div style="left:843px;top:516px;width:1px;height:20px;background:#120e3e"></div>
<div style="left:842px;top:536px;width:65px;height:1px;background:#e2e0ff"></div>
<div style="left:906px;top:515px;width:1px;height:22px;background:#e2e0ff"></div>
<div class="t" style="left:845px;top:518px;width:61px;overflow:hidden">202</div>
<div style="left:908px;top:515px;width:96px;height:22px;background:#ffffd4"></div>
<div style="left:908px;top:515px;width:96px;height:1px;background:#48428a"></div>
<div style="left:908px;top:515px;width:1px;height:22px;background:#48428a"></div>
<div style="left:909px;top:516px;width:94px;height:1px;background:#120e3e"></div>
<div style="left:909px;top:516px;width:1px;height:20px;background:#120e3e"></div>
<div style="left:908px;top:536px;width:96px;height:1px;background:#e2e0ff"></div>
<div style="left:1003px;top:515px;width:1px;height:22px;background:#e2e0ff"></div>
<div class="t" style="left:910px;top:518px;width:93px;overflow:hidden">Belföldi értékesítés</div>
<div style="left:842px;top:538px;width:162px;height:22px;background:#ffffd4"></div>
<div style="left:842px;top:538px;width:162px;height:1px;background:#48428a"></div>
<div style="left:842px;top:538px;width:1px;height:22px;background:#48428a"></div>
<div style="left:843px;top:539px;width:160px;height:1px;background:#120e3e"></div>
<div style="left:843px;top:539px;width:1px;height:20px;background:#120e3e"></div>
<div style="left:842px;top:559px;width:162px;height:1px;background:#e2e0ff"></div>
<div style="left:1003px;top:538px;width:1px;height:22px;background:#e2e0ff"></div>
<div class="t" style="left:845px;top:541px;width:158px;overflow:hidden">164-VMS/2007</div>
<div style="left:842px;top:561px;width:116px;height:22px;background:#ffffd4"></div>
<div style="left:842px;top:561px;width:116px;height:1px;background:#48428a"></div>
<div style="left:842px;top:561px;width:1px;height:22px;background:#48428a"></div>
<div style="left:843px;top:562px;width:114px;height:1px;background:#120e3e"></div>
<div style="left:843px;top:562px;width:1px;height:20px;background:#120e3e"></div>
<div style="left:842px;top:582px;width:116px;height:1px;background:#e2e0ff"></div>
<div style="left:957px;top:561px;width:1px;height:22px;background:#e2e0ff"></div>
<div class="t" style="left:845px;top:564px;width:112px;overflow:hidden">44-KMU-250/2007</div>
<div style="left:958px;top:561px;width:46px;height:22px;background:#ffffd4"></div>
<div style="left:958px;top:561px;width:46px;height:1px;background:#48428a"></div>
<div style="left:958px;top:561px;width:1px;height:22px;background:#48428a"></div>
<div style="left:959px;top:562px;width:44px;height:1px;background:#120e3e"></div>
<div style="left:959px;top:562px;width:1px;height:20px;background:#120e3e"></div>
<div style="left:958px;top:582px;width:46px;height:1px;background:#e2e0ff"></div>
<div style="left:1003px;top:561px;width:1px;height:22px;background:#e2e0ff"></div>
<div class="t" style="left:961px;top:564px;width:42px;overflow:hidden">1</div>
<div style="left:842px;top:584px;width:162px;height:22px;background:#ffffd4"></div>
<div style="left:842px;top:584px;width:162px;height:1px;background:#48428a"></div>
<div style="left:842px;top:584px;width:1px;height:22px;background:#48428a"></div>
<div style="left:843px;top:585px;width:160px;height:1px;background:#120e3e"></div>
<div style="left:843px;top:585px;width:1px;height:20px;background:#120e3e"></div>
<div style="left:842px;top:605px;width:162px;height:1px;background:#e2e0ff"></div>
<div style="left:1003px;top:584px;width:1px;height:22px;background:#e2e0ff"></div>
<div style="left:842px;top:607px;width:162px;height:23px;background:#ffffd4"></div>
<div style="left:842px;top:607px;width:162px;height:1px;background:#48428a"></div>
<div style="left:842px;top:607px;width:1px;height:23px;background:#48428a"></div>
<div style="left:843px;top:608px;width:160px;height:1px;background:#120e3e"></div>
<div style="left:843px;top:608px;width:1px;height:21px;background:#120e3e"></div>
<div style="left:842px;top:629px;width:162px;height:1px;background:#e2e0ff"></div>
<div style="left:1003px;top:607px;width:1px;height:23px;background:#e2e0ff"></div>
<div class="t" style="left:846px;top:611px;width:157px;overflow:hidden">Normál</div>
<div style="left:987px;top:609px;width:16px;height:19px;background:#aeaadc"></div>
<div style="left:987px;top:609px;width:16px;height:1px;background:#e2e0ff"></div>
<div style="left:987px;top:609px;width:1px;height:19px;background:#e2e0ff"></div>
<div style="left:988px;top:626px;width:14px;height:1px;background:#9490c8"></div>
<div style="left:1001px;top:610px;width:1px;height:17px;background:#9490c8"></div>
<div style="left:987px;top:627px;width:16px;height:1px;background:#120e3e"></div>
<div style="left:1002px;top:609px;width:1px;height:19px;background:#120e3e"></div>
<svg style="position:absolute;left:991px;top:616px" width="9" height="6"><path d="M0 0H8L4 4Z" fill="#000"/></svg>
<div style="left:842px;top:630px;width:162px;height:72px;background:#ffffd4"></div>
<div style="left:842px;top:630px;width:162px;height:1px;background:#48428a"></div>
<div style="left:842px;top:630px;width:1px;height:72px;background:#48428a"></div>
<div style="left:843px;top:631px;width:160px;height:1px;background:#120e3e"></div>
<div style="left:843px;top:631px;width:1px;height:70px;background:#120e3e"></div>
<div style="left:842px;top:701px;width:162px;height:1px;background:#e2e0ff"></div>
<div style="left:1003px;top:630px;width:1px;height:72px;background:#e2e0ff"></div>
<div style="left:2px;top:721px;width:68px;height:1px;background:#6c68a8"></div>
<div style="left:2px;top:721px;width:1px;height:15px;background:#6c68a8"></div>
<div style="left:2px;top:735px;width:68px;height:1px;background:#e2e0ff"></div>
<div style="left:69px;top:721px;width:1px;height:15px;background:#e2e0ff"></div>
<div style="left:72px;top:721px;width:100px;height:1px;background:#6c68a8"></div>
<div style="left:72px;top:721px;width:1px;height:15px;background:#6c68a8"></div>
<div style="left:72px;top:735px;width:100px;height:1px;background:#e2e0ff"></div>
<div style="left:171px;top:721px;width:1px;height:15px;background:#e2e0ff"></div>
<div style="left:174px;top:721px;width:19px;height:1px;background:#6c68a8"></div>
<div style="left:174px;top:721px;width:1px;height:15px;background:#6c68a8"></div>
<div style="left:174px;top:735px;width:19px;height:1px;background:#e2e0ff"></div>
<div style="left:192px;top:721px;width:1px;height:15px;background:#e2e0ff"></div>
<div style="left:195px;top:721px;width:821px;height:1px;background:#6c68a8"></div>
<div style="left:195px;top:721px;width:1px;height:15px;background:#6c68a8"></div>
<div style="left:195px;top:735px;width:821px;height:1px;background:#e2e0ff"></div>
<div style="left:1015px;top:721px;width:1px;height:15px;background:#e2e0ff"></div>
<div class="t" style="left:3px;top:721px;font-size:11.5px">-v1.89-pre1H</div>
<div class="t" style="left:74px;top:721px;font-size:11.5px">4 / 4</div>
<div class="t" style="left:197px;top:721px;font-size:11.5px">(*)Kód</div>
<div style="left:175px;top:723px;width:9px;height:9px;border-radius:50%;background:#fff;border-left:2px solid #000;border-top:2px solid #000;border-right:1px solid #c8c4ec;border-bottom:1px solid #c8c4ec;transform:rotate(0deg)"></div>
<div style="left:0px;top:739px;width:1022px;height:1px;background:#120e3e"></div>
<div style="left:0px;top:743px;width:1022px;height:1px;background:#e2e0ff"></div>
</body></html>
